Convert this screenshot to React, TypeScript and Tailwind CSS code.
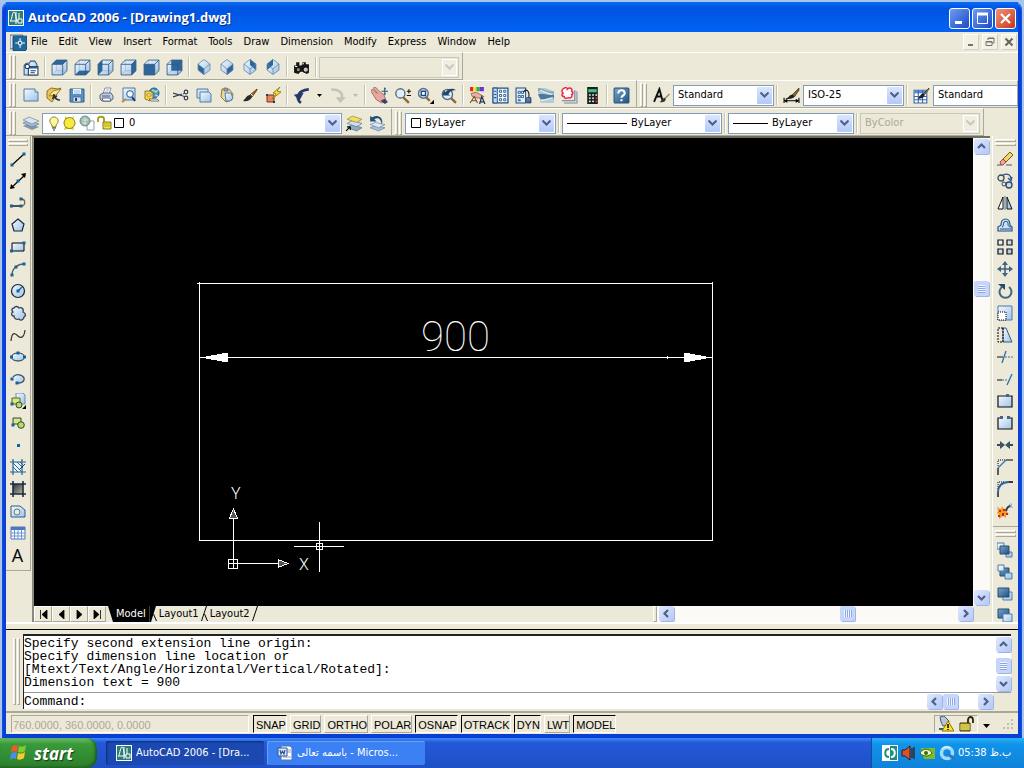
import { ReactNode } from "react";
import clsx from "clsx";

const NAVY = "#1d3c63";
const STEEL = "#4f7ea8";

function Icon({ children, size = 16 }: { children: ReactNode; size?: number }) {
  return (
    <svg width={size} height={size} viewBox="0 0 16 16" fill="none" aria-hidden="true">
      {children}
    </svg>
  );
}

// gradients shared by all of the icons
function Gradients() {
  return (
    <svg width="0" height="0" className="absolute" aria-hidden="true">
      <defs>
        <linearGradient id="sheen" x1="0" y1="0" x2="1" y2="1">
          <stop offset="0" stopColor="#f4f9ff" />
          <stop offset="1" stopColor="#9fc3e6" />
        </linearGradient>
        <linearGradient id="deep" x1="0" y1="0" x2="1" y2="1">
          <stop offset="0" stopColor="#7aa6cf" />
          <stop offset="1" stopColor="#1f507f" />
        </linearGradient>
        <linearGradient id="dusk" x1="0" y1="0" x2="1" y2="1">
          <stop offset="0" stopColor="#26344f" />
          <stop offset="1" stopColor="#b7b98a" />
        </linearGradient>
      </defs>
    </svg>
  );
}

/* ---------- view cubes ---------- */

function Cube({ face }: { face: string }) {
  return (
    <Icon size={17}>
      <path d="M1 5 5 1h10v10l-4 4H1z" fill="url(#sheen)" />
      <path d="M5 1v10h10M5 11l-4 4" stroke="#9db8d3" strokeWidth=".7" />
      <path d={face} fill="#2c669b" />
      <path d="M1 5 5 1h10v10l-4 4H1zM1 5h10v10M11 5l4-4" stroke="#33587f" strokeWidth=".8" />
    </Icon>
  );
}

function IsoCube({ face }: { face: string }) {
  return (
    <Icon>
      <path d="M8 0 14 5v6l-6 5-6-5V5z" fill="url(#sheen)" />
      <path d={face} fill="#2c669b" />
      <path d="M8 .5 14 5v6l-6 4.500L2 11V5zM2 5l6 5 6-5M8 10v5" stroke="#6485a6" strokeWidth=".8" />
    </Icon>
  );
}

const namedViews = (
  <Icon size={17}>
    <path d="M4 4h3l1-2h4l2 3v10H2V6z" fill="url(#sheen)" stroke="#33587f" />
    <path d="M6 7h9v8H6z" fill="#fff" stroke={NAVY} />
    <path d="M6 8h9" stroke="#2c5e93" strokeWidth="2" />
    <path d="M8 11h5M8 13h4" stroke={NAVY} />
    <circle cx="5" cy="7" r="2" fill="#fff" stroke={NAVY} />
  </Icon>
);

const camera = (
  <Icon size={17}>
    <path d="M1 6h2V3h3v3h2l1-3h3v2h3v8l-2 1-4-2H7l-2 2-4-1z" fill="#151515" />
    <circle cx="5" cy="10" r="2" fill="#8d8d86" stroke="#111" />
    <circle cx="12" cy="10" r="2.5" fill="#c9c8bd" stroke="#111" />
    <path d="M2 7h2M9 5l1-1" stroke="#fff" />
  </Icon>
);

/* ---------- standard toolbar ---------- */

const newFile = (
  <Icon>
    <path d="M1 2h11l3 3v9H1z" fill="url(#sheen)" stroke={STEEL} />
    <path d="M12 2v3h3" stroke={STEEL} fill="#fff" />
  </Icon>
);

const openFile = (
  <Icon>
    <path d="M1 4 5 1l7 1 3-1-4 6-5 8-5-4z" fill="#e8c65c" stroke="#97711b" />
    <path d="M3 9 7 4l8-2-5 6z" fill="#fbe9a0" stroke="#97711b" strokeWidth=".8" />
    <path d="M8 8c1 4 3 5 6 5M8 7l-1 4 4-2" stroke="#333" strokeWidth="1.5" />
  </Icon>
);

const saveFile = (
  <Icon>
    <path d="M1 2h14v13H1z" fill="#5c8fc0" stroke="#31618f" />
    <path d="M4 2h8v5H4z" fill="#eaf3fc" />
    <path d="M5 4h6M5 6h6" stroke="#91afcb" strokeWidth=".8" />
    <path d="M4 10h8v5H4z" fill="#cfe0f0" stroke="#31618f" strokeWidth=".7" />
    <path d="M6 11h2v3H6z" fill={NAVY} />
  </Icon>
);

const printer = (
  <Icon>
    <path d="M5 7 7 1h6l-2 6z" fill="#fff" stroke="#6b7898" strokeWidth=".8" />
    <path d="M2 8l3-2h8l2 3v3l-3 2H4l-2-2z" fill="#c9d0e2" stroke="#4a577a" strokeWidth=".9" />
    <path d="M4 11h8l1 3H5z" fill="#fff" stroke="#4a577a" strokeWidth=".9" />
    <path d="M4 9h8" stroke="#4a577a" />
    <path d="M8 3h3M7 5h3" stroke="#8b99b7" strokeWidth=".8" />
  </Icon>
);

const preview = (
  <Icon>
    <path d="M2 1h12v12H2z" fill="url(#sheen)" stroke={STEEL} />
    <path d="M5 12 1 15" stroke="#b8903a" strokeWidth="2" />
    <path d="m11 10 3 4" stroke={NAVY} strokeWidth="2" />
    <circle cx="9" cy="7" r="3.3" fill="#eef6ff" stroke="#315b88" />
  </Icon>
);

const publish = (
  <Icon>
    <circle cx="10" cy="6" r="5" fill="#4a91d1" stroke="#225d96" />
    <path d="m8 3 4 2 2-2M11 8l3 1" stroke="#a4dca9" strokeWidth="1.5" />
    <path d="M1 4h5l3 2v6l-3 2-5-2z" fill="#f6d640" stroke="#80620c" strokeWidth=".8" />
    <path d="M3 7h4v2H3z" fill="#fff" stroke="#80620c" strokeWidth=".6" />
    <path d="M5 12h8l2 2H7z" fill="#fff" stroke="#475b7e" strokeWidth=".8" />
  </Icon>
);

const cut = (
  <Icon>
    <path d="M0 6 10 9M0 10l9-3" stroke="#313d52" strokeWidth="1.2" />
    <circle cx="13" cy="5" r="1.8" stroke="#313d52" strokeWidth="1.2" />
    <circle cx="13" cy="11" r="1.8" stroke="#313d52" strokeWidth="1.2" />
    <path d="m10 9 2 1M10 7l2-1" stroke="#313d52" />
  </Icon>
);

const copy = (
  <Icon>
    <path d="M1 2h11v9H1z" fill="#cfe2f5" stroke={STEEL} />
    <path d="M4 5h9l2 2v8H4z" fill="url(#sheen)" stroke={STEEL} />
  </Icon>
);

const paste = (
  <Icon>
    <path d="M3 2h7l4 5-1 6-6 2-5-5z" fill="#e6d9a1" stroke="#8c7b39" />
    <path d="M5 1h3l1 3H5z" fill="#9aa4b4" stroke="#566173" strokeWidth=".7" />
    <path d="M6 6h6l2 5-3 3H7z" fill="url(#sheen)" stroke={STEEL} />
  </Icon>
);

const brush = (
  <Icon>
    <path d="M15 2 8 8l2 2 5-7z" fill="#a46a31" stroke="#50300f" strokeWidth=".8" />
    <path d="M8 8c-3 0-4 3-7 6 4 1 8-1 9-4z" fill="#2b2b2b" />
    <path d="m9 7 2 2" stroke="#e0d7ad" />
  </Icon>
);

const blockEdit = (
  <Icon>
    <path d="M2 8h7v7H2z" fill="#e7855c" stroke="#7d3519" />
    <path d="M15 0 8 6l3 1-4 5 9-7-4-1z" fill="#f8d92d" stroke="#8b6c07" strokeWidth=".8" />
    <path d="M1 7h2v2H1zM8 14h2v2H8z" fill={NAVY} />
  </Icon>
);

const undo = (
  <Icon size={18}>
    <path d="M7 15C2 11 4 4 14 3" stroke="#26376b" strokeWidth="2.4" />
    <path d="M1 7h9l-5 6z" fill="#26376b" transform="rotate(-12 5 9)" />
  </Icon>
);

const redo = (
  <Icon size={18}>
    <path d="M2 3c8 0 11 4 9 9" stroke="#c3c2b7" strokeWidth="2.2" />
    <path d="M6 10h9l-5 5z" fill="#c3c2b7" />
  </Icon>
);

const pan = (
  <Icon size={17}>
    <path d="M0 4 1 2l5 4-4-5 2-1 5 5 3 2 2 5-4 3-5-3z" fill="#e5a8a0" stroke="#9a564f" strokeWidth=".7" />
    <path d="m9 13 4-2 3 3-3 2z" fill="#30466d" />
    <path d="M13 1v6M10 4h6" stroke="#27517d" />
    <path d="m12 2 1-2 1 2zM12 6l1 2 1-2z" fill="#27517d" />
  </Icon>
);

const zoomRealtime = (
  <Icon size={17}>
    <path d="m8 9 6 6" stroke="#8c6a33" strokeWidth="2.2" />
    <circle cx="6" cy="6" r="4.3" fill="#dfeefb" stroke="#5a6e84" strokeWidth="1.3" />
    <path d="M14 2v4M12 4h4M12 8h4" stroke="#111" />
  </Icon>
);

const zoomWindow = (
  <Icon size={17}>
    <path d="m8 9 4 4" stroke="#8c6a33" strokeWidth="2.2" />
    <circle cx="6" cy="6" r="4.6" fill="#dfeefb" stroke="#5a6e84" strokeWidth="1.3" />
    <path d="M4 4h4v4H4z" fill="#fff" stroke="#154a82" strokeWidth="1.3" />
    <path d="M16 12v4h-4z" fill="#000" />
  </Icon>
);

const zoomPrevious = (
  <Icon size={17}>
    <path d="m9 9 6 6" stroke="#8c6a33" strokeWidth="2.2" />
    <circle cx="7" cy="7" r="4.8" fill="#dfeefb" stroke="#5a6e84" strokeWidth="1.3" />
    <path d="m2 8 2-5 1 2c3-4 7-4 10-2-4 0-6 1-7 4l2 1z" fill="#21456e" />
  </Icon>
);

const properties = (
  <Icon size={17}>
    <path d="M1 0h3v4H1z" fill="#e32424" />
    <path d="M4 0h3v4H4z" fill="#f0de2e" />
    <path d="M7 0h3v4H7z" fill="#28b43b" />
    <path d="M10 0h4v4h-4z" fill="#6c34d6" />
    <path d="m2 6 5-1 7 4-2 2-5-1-4-1z" fill="#e9b2a4" stroke="#8d4e43" strokeWidth=".7" />
    <path d="m1 15 4-6 3 6M3 13h4" stroke="#70531c" />
    <path d="m10 16 2-7 3 7M11 14h3" stroke="#1c365a" strokeWidth="1.2" />
  </Icon>
);

const designCenter = (
  <Icon size={17}>
    <path d="M1 1h14v14H1z" fill="#f6fafe" stroke="#1d4f86" strokeWidth="1.2" />
    <path d="M1 1h4v14H1z" fill="#c4dbf1" stroke="#1d4f86" strokeWidth=".9" />
    <path d="M7 3h2v2H7zM11 3h2v2h-2zM7 7h2v2H7zM11 7h2v2h-2zM7 11h2v2H7zM11 11h2v2h-2z" fill="#fff" stroke="#1d4f86" strokeWidth=".8" />
    <path d="M2 4h2M2 7h2M2 10h2" stroke="#1d4f86" />
  </Icon>
);

const toolPalettes = (
  <Icon size={17}>
    <path d="M1 1h9v14H1z" fill="#e3eefa" stroke="#1d4f86" />
    <path d="M3 4h2v2H3zM6 4h2v2H6zM3 8h2v2H3zM6 8h2v2H6zM3 12h2v1H3z" fill="#fff" stroke="#1d4f86" strokeWidth=".8" />
    <path d="M8 5c2-4 6-2 5 5" stroke="#111" />
    <path d="M11 10h4v5h-4z" fill="url(#deep)" stroke={NAVY} strokeWidth=".8" />
  </Icon>
);

const sheetSet = (
  <Icon size={17}>
    <path d="M0 1h7l8 3v11H2V9L0 7z" fill="#b5cbd9" />
    <path d="M0 7c5-2 9 2 15 0v4c-4-2-8 2-13 0z" fill="#4e7898" />
    <path d="M0 1c5 0 8 4 15 3v2C9 7 5 3 0 4z" fill="#86a7bc" />
    <path d="m2 3 11 4M3 13l11-3" stroke="#e9eff2" />
  </Icon>
);

const markup = (
  <Icon size={17}>
    <path d="M15 4v11H3" stroke="#7d86ad" />
    <path d="M13 3v10H1" stroke="#69719a" />
    <path
      d="M3 1c2-1 3 0 3 1 2-2 5-1 4 2 2 1 1 3 0 3 1 2-1 4-3 3-2 1-4 1-4-1-2 0-3-2-1-3-2-2-1-4 1-5z"
      fill="#fff"
      stroke="#e22e46"
      strokeWidth="1.4"
    />
  </Icon>
);

const calculator = (
  <Icon size={17}>
    <path d="M3 0h10v16H3z" fill="#17201c" />
    <path d="M4 2h8v3H4z" fill="#3fbf83" />
    <path d="M5 7h1v1H5zM8 7h1v1H8zM11 7h1v1h-1zM5 10h1v1H5zM8 10h1v1H8zM5 13h1v1H5zM8 13h1v1H8z" fill="#fff" stroke="#fff" strokeWidth=".5" />
    <path d="M11 10h1v1h-1zM11 13h1v1h-1z" fill="#f33" stroke="#f33" strokeWidth=".5" />
  </Icon>
);

const help = (
  <Icon size={17}>
    <rect x="1" y="1" width="14" height="14" rx="1" fill="url(#deep)" stroke="#23527f" />
    <path d="M5 6c0-4 6-4 6 0 0 2-3 2-3 4M8 11.500v2" stroke="#fff" strokeWidth="2" />
  </Icon>
);

const textStyle = (
  <Icon size={17}>
    <path d="m1 14 5-12 3 11M3 9h5" stroke="#111" strokeWidth="1.8" />
    <path d="m15 6-4 4 1 1 4-4z" fill="#a7894b" />
    <path d="M11 10c-3 1-2 3-5 4 3 1 6 0 6-3z" fill="#333" />
  </Icon>
);

const dimStyle = (
  <Icon size={17}>
    <path d="m15 1-6 6 2 2 4-6z" fill="#8a6b3a" stroke="#3d2c10" strokeWidth=".7" />
    <path d="M9 7C6 7 6 10 2 11c4 1 8 0 9-2z" fill="#222" />
    <path d="M1 10v5M15 10v5M1 13h14" stroke="#000" />
    <path d="m1 13 3-2v4zM15 13l-3-2v4z" fill="#000" />
  </Icon>
);

const tableStyle = (
  <Icon size={17}>
    <path d="M1 3h12v12H1z" fill="#fff" stroke="#3366a9" />
    <path d="M1 3h12v3H1z" fill="#5a8bd0" />
    <path d="M1 9h12M1 12h12M5 3v12M9 3v12" stroke="#3366a9" />
    <path d="m15 1-5 5 1 1 4-5z" fill="#9a7537" stroke="#4b340f" strokeWidth=".7" />
    <path d="M10 6c-3 0-3 3-6 5 4 0 7-1 7-4z" fill="#222" />
  </Icon>
);

/* ---------- layers ---------- */

const layers = (
  <Icon>
    <path d="m0 11 6-3 10 4-7 3z" fill="#8296ae" />
    <path d="m0 8 6-3 10 4-7 3z" fill="#a8bacd" stroke="#5e7592" strokeWidth=".6" />
    <path d="m0 5 6-3 10 4-7 3z" fill="#d8e4ef" stroke="#5e7592" strokeWidth=".6" />
  </Icon>
);

const layerCurrent = (
  <Icon size={17}>
    <path d="m2 12 5-3 9 3-5 3z" fill="#91a9c3" stroke="#4b6b8d" strokeWidth=".6" />
    <path d="m2 8 5-3 9 3-5 3z" fill="#cfdeed" stroke="#4b6b8d" strokeWidth=".6" />
    <path d="m2 4 5-3 9 3-5 3z" fill="#f0de6b" stroke="#8d7c16" strokeWidth=".6" />
    <path d="M1 15l4-4M5 11H2M5 11v3" stroke="#000" />
  </Icon>
);

const layerPrevious = (
  <Icon size={17}>
    <path d="m2 12 5-2 9 2-6 3z" fill="#a9bfd6" stroke="#5f80a3" strokeWidth=".6" />
    <path d="m2 9 5-2 9 2-6 3z" fill="#dbe8f5" stroke="#5f80a3" strokeWidth=".6" />
    <path d="M2 6h6L6 4c3-2 6-1 7 5 2-6-3-10-9-7L2 1z" fill="#24507e" />
  </Icon>
);

const layerState = (
  <svg width="78" height="16" viewBox="0 0 78 16" fill="none" aria-hidden="true">
    <path d="M5 10C1 7 3 2 7 2s6 5 2 8v2H5z" fill="#fbf6a4" stroke="#8c8320" />
    <path d="M5 13h4M6 15h2" stroke="#333" />
    <path d="m18 1 2 2h5l2-2-1 4 1 3-1 3 1 4-4-1h-3l-3 1 1-4-1-3 1-3z" fill="#d9c92d" />
    <circle cx="22.5" cy="8" r="5.5" fill="#f7e93e" stroke="#8c8320" />
    <path d="M40 6h7v9h-7z" fill="#fff" stroke="#8fa4a6" />
    <circle cx="38" cy="6" r="5" fill="#9eb9ae" stroke="#6d8d8b" />
    <path d="M35 5h6M38 2v8M35 8h5" stroke="#dbe6df" />
    <path d="M51 7V4c0-3 6-3 6 0v5" stroke="#a59a1c" strokeWidth="1.800" />
    <path d="M56 7h8v7h-8z" fill="#f3e640" stroke="#82791a" />
    <path d="M57 9h6M57 11h6" stroke="#a59a1c" strokeWidth=".8" />
    <path d="M67.500 3.500h9v9h-9z" fill="#fff" stroke="#000" />
  </svg>
);

const swatch = (
  <svg width="10" height="10" className="ml-px shrink-0" aria-hidden="true">
    <path d="M.5.5h9v9h-9z" fill="#fff" stroke="#000" />
  </svg>
);

/* ---------- draw toolbar ---------- */

// small blue grip marks on the geometry
function Dots({ at }: { at: number[][] }) {
  return (
    <>
      {at.map(([x, y]) => (
        <rect key={`${x}-${y}`} x={x - 1.5} y={y - 1.5} width="3" height="3" fill="#14639a" />
      ))}
    </>
  );
}

const CLOUD =
  "M4 3c1-2 4-2 5 0 3-1 5 1 4 4 3 1 3 4 1 5 0 3-4 4-5 2-2 1-5 0-5-3-3 0-3-3-1-4-2-2-1-4 1-4z";

const drawTools: [string, ReactNode][] = [
  ["Line", <Icon><path d="M2 14 14 3" stroke="#000" strokeWidth="1.2" /><Dots at={[[2, 14], [14, 3]]} /></Icon>],
  ["Construction line", <Icon><path d="M1 15 15 2" stroke="#000" strokeWidth="1.2" /><path d="m0 16 1-5 4 4zM16 0l-5 1 4 4z" fill="#000" /><Dots at={[[8, 8]]} /></Icon>],
  ["Polyline", <Icon><path d="M1 11h10" stroke="#000" strokeWidth="1.3" /><path d="M11 4c5 0 5 7 0 7" stroke="#7f6144" strokeWidth="1.3" /><Dots at={[[1.5, 11], [11, 11], [11, 4]]} /></Icon>],
  ["Polygon", <Icon><path d="M8 2 14 7l-2 7H4L2 7z" fill="url(#sheen)" stroke="#16263a" strokeWidth="1.2" /></Icon>],
  ["Rectangle", <Icon><path d="M2 4h12v8H2z" fill="url(#sheen)" stroke="#000" /><Dots at={[[1.5, 12], [14, 4]]} /></Icon>],
  ["Arc", <Icon><path d="M2 14C2 8 7 3 14 3" stroke="#5b5b5b" strokeWidth="1.3" /><Dots at={[[2, 14], [6, 6], [14, 3]]} /></Icon>],
  ["Circle", <Icon><circle cx="8" cy="8" r="6.5" fill="url(#sheen)" stroke="#16263a" strokeWidth="1.2" /><path d="m8 8 4-4" stroke="#14639a" strokeWidth="1.5" /><Dots at={[[8, 8]]} /></Icon>],
  ["Revision cloud", <Icon><path d={CLOUD} fill="url(#sheen)" stroke="#33404f" strokeWidth="1.3" /></Icon>],
  ["Spline", <Icon><path d="M1 14C2 3 6 7 8 9s6 3 7-6" stroke="#333" strokeWidth="1.2" /></Icon>],
  ["Ellipse", <Icon><ellipse cx="8" cy="8" rx="6.5" ry="4" fill="url(#sheen)" stroke="#16263a" /><Dots at={[[1.5, 8], [8, 4], [14.5, 8]]} /></Icon>],
  ["Ellipse arc", <Icon><path d="M3 6c4-5 12-1 11 3-1 3-4 3-6 3" fill="url(#sheen)" stroke="#3a506b" strokeWidth="1.3" /><Dots at={[[2, 8], [7, 12]]} /></Icon>],
  ["Insert block", <Icon><path d="M6 0h7l2 2v9H6z" fill="url(#sheen)" stroke="#6a8fb4" /><path d="M2 5h8v6H2z" fill="#d9e679" stroke="#4a6c2d" /><circle cx="9" cy="12" r="3" fill="#bcd667" stroke="#2f4e2a" /><Dots at={[[2, 11]]} /><path d="M16 12v4h-4z" fill="#000" /></Icon>],
  ["Make block", <Icon><path d="M3 3h8v6H3z" fill="#d9e679" stroke="#2b4c4a" /><circle cx="11" cy="10" r="3.3" fill="#bcd667" stroke="#2f4e2a" /><Dots at={[[3, 10]]} /></Icon>],
  ["Point", <Icon><Dots at={[[8.5, 8.5]]} /></Icon>],
  ["Hatch", <Icon><path d="M3 3h10v10H3z" fill="#eaf4fd" /><path d="m3 4 9 9M3 8l5 5M7 3l6 6M10 3l3 3" stroke="#24669b" /><path d="M3 0v16M12 0v16M0 3h16M0 13h16" stroke="#2b6090" strokeWidth="1.2" /><path d="m9 11 6-6" stroke={NAVY} /></Icon>],
  ["Gradient", <Icon><path d="M3 3h10v10H3z" fill="url(#dusk)" /><path d="M3 0v16M13 0v16M0 3h16M0 13h16" stroke="#1d2b45" strokeWidth="1.6" /></Icon>],
  ["Region", <Icon><path d="M1 3h9l5 4v7H1z" fill="url(#sheen)" stroke="#315d8a" /><circle cx="7" cy="9" r="3" fill="#eee9d4" stroke="#54799e" /></Icon>],
  ["Table", <Icon><path d="M1 2h14v12H1z" fill="#fff" stroke="#4b78b8" /><path d="M1 2h14v3H1z" fill="#4b78c0" /><path d="M1 8h14M1 11h14M4.500 5v9M8 5v9M11.500 5v9" stroke="#6b96d2" /></Icon>],
];

/* ---------- modify toolbar ---------- */

const modifyTools: [string, ReactNode][] = [
  ["Erase", <Icon><path d="M0 14h4M9 14h6" stroke="#555" /><path d="m6 8 7-7 3 3-7 7z" fill="#f1d567" stroke="#5f4c1a" strokeWidth=".9" /><path d="m3 11 3-3 3 3-3 3H4z" fill="#f1a497" stroke="#7c3329" strokeWidth=".8" /></Icon>],
  ["Copy", <Icon><circle cx="4" cy="5" r="3" stroke="#33475f" strokeWidth="1.3" /><circle cx="12" cy="12" r="3" fill="#c5dcf2" stroke="#33475f" strokeWidth="1.3" /><circle cx="7" cy="11" r="2" stroke="#33475f" /><path d="M6 2c5-2 8 0 8 4M11 5l3 3 1-4" stroke="#245785" strokeWidth="1.3" /></Icon>],
  ["Mirror", <Icon><path d="M6 2v12H1z" fill="#fff" stroke="#111" /><path d="M10 2v12h5z" fill="#a9c9e6" stroke="#111" /><path d="M8 1v14" stroke="#3b79ae" /></Icon>],
  ["Offset", <Icon><path d="M1 14v-4c0-1 3-1 3-2 0-8 9-8 9 0 0 1 2 1 2 2v4z" fill="#cbe0f4" stroke="#1d4f86" strokeWidth="1.2" /><path d="M3 12h11M5 10c2 0 1-4 2-5s4-1 4 1 0 4 3 4" stroke="#1d4f86" /></Icon>],
  ["Array", <Icon><path d="M1 1h5v5H1zM10 1h5v5h-5zM1 10h5v5H1zM10 10h5v5h-5z" fill="url(#sheen)" stroke="#111" strokeWidth="1.2" /></Icon>],
  ["Move", <Icon><path d="M8 2v12M2 8h12" stroke="#3e6484" strokeWidth="1.6" /><path d="m5 4 3-4 3 4zM5 12l3 4 3-4zM4 5 0 8l4 3zM12 5l4 3-4 3z" fill="#3e6484" /></Icon>],
  ["Rotate", <Icon><path d="M5 4a6 6 0 1 0 7 0" stroke="#416581" strokeWidth="2" /><path d="M1 1h7v6z" fill="#254b6e" /></Icon>],
  ["Scale", <Icon><path d="M1 1h14v14H1z" fill="url(#sheen)" stroke="#4979aa" /><path d="M1 7h8v8H1z" fill="#fff" stroke="#000" strokeDasharray="1 1" /></Icon>],
  ["Stretch", <Icon><path d="M6 1h3l6 14H6z" fill="url(#sheen)" stroke="#335d88" /><path d="M6 1H1v14h5z" stroke="#000" strokeDasharray="2 1" /></Icon>],
  ["Trim", <Icon><path d="M0 8h6" stroke="#111" /><path d="M8 8h8" stroke="#3b79ae" strokeDasharray="2 1" /><path d="m9 2-4 12" stroke="#2c6ea5" strokeWidth="1.3" /></Icon>],
  ["Extend", <Icon><path d="M0 9h5" stroke="#111" /><path d="M5 9h6" stroke="#3b79ae" strokeDasharray="2 1" /><path d="m15 3-5 11" stroke="#2c6ea5" strokeWidth="1.3" /></Icon>],
  ["Break at point", <Icon><path d="M1 3h14v11H1z" fill="url(#sheen)" stroke="#111" strokeWidth="1.2" /><path d="M9 1h3v3H9z" fill="#446789" /></Icon>],
  ["Break", <Icon><path d="M1 3h14v11H1z" fill="url(#sheen)" /><path d="M4 3H1v11h14V3h-3" stroke="#111" strokeWidth="1.2" /><path d="M3 1h3v3H3zM10 1h3v3h-3z" fill="#446789" /></Icon>],
  ["Join", <Icon><path d="M0 8h5M11 8h5" stroke="#111" strokeWidth="1.4" /><path d="m3 4 5 4-5 4zM13 4 8 8l5 4z" fill="#3c5268" /></Icon>],
  ["Chamfer", <Icon><path d="M1 16V9M9 1h7" stroke="#000" strokeWidth="1.2" /><path d="M1 7V1h7" stroke="#000" strokeDasharray="1 1" /><path d="m1 9 8-8" stroke="#2f77bb" strokeWidth="1.3" /></Icon>],
  ["Fillet", <Icon><path d="M1 16v-5M12 1h4" stroke="#000" strokeWidth="1.3" /><path d="M1 8V1h7" stroke="#000" strokeDasharray="1 1" /><path d="M1 12C1 5 5 1 12 1" stroke="#2f62a5" strokeWidth="1.8" /></Icon>],
  ["Explode", <Icon><path d="m0 4 4 2 1-3 2 3 4-1-1 4 2 2-3 1v3l-3-2-4 3V12L0 10l1-2z" fill="#f29a2e" /><path d="M2 7h2v2H2zM6 6h2v2H6zM5 10h2v3H5zM1 12h2v2H1zM9 10h2v2H9z" fill="#c22a1d" /><path d="M9 8c1-4 3-5 5-5" stroke="#223c5c" strokeWidth="1.8" /><path d="M14 0v5M12 1l4 4M12 5l3-4" stroke="#8fa3b8" strokeWidth=".8" /></Icon>],
];

const orderTools: [string, ReactNode][] = [
  ["Bring to front", <Icon><path d="M0 1h7v6H0zM9 10h6v5H9z" fill="url(#sheen)" stroke={STEEL} /><path d="M3 4h9v8H3z" fill="url(#deep)" stroke="#244d75" /></Icon>],
  ["Send to back", <Icon><path d="M3 4h9v8H3z" fill="url(#deep)" stroke="#244d75" /><path d="M1 1h6v6H1zM8 9h7v6H8z" fill="url(#sheen)" stroke={STEEL} /></Icon>],
  ["Bring above object", <Icon><path d="M6 6h9v8H6z" fill="url(#sheen)" stroke={STEEL} /><path d="M1 2h11v9H1z" fill="url(#deep)" stroke="#244d75" /></Icon>],
  ["Send under object", <Icon><path d="M1 1h11v9H1z" fill="url(#deep)" stroke="#244d75" /><path d="M6 6h9v8H6z" fill="url(#sheen)" stroke={STEEL} /></Icon>],
];

/* ---------- toolbar parts ---------- */

function ToolButton({ label, children }: { label: string; children: ReactNode }) {
  return (
    <button aria-label={label} className="flex h-[22px] w-[23px] shrink-0 items-center justify-center">
      {children}
    </button>
  );
}

function Caret({ label, off }: { label: string; off?: boolean }) {
  return (
    <button aria-label={label} className="flex w-[13px] shrink-0 items-center justify-center">
      <svg width="5" height="3" aria-hidden="true">
        <path d="M0 0h5L2.500 3z" fill={off ? "#bab9ad" : "#000"} />
      </svg>
    </button>
  );
}

function Sep() {
  return (
    <div className="flex h-5 w-1.5 shrink-0 justify-center">
      <div className="w-0.5 border-r border-l border-r-white border-l-[#c5c2b0]" />
    </div>
  );
}

function Grip({ flat }: { flat?: boolean }) {
  const bar = "border border-t-white border-l-white border-r-[#aca899] border-b-[#aca899]";
  return (
    <div
      className={clsx(
        "flex shrink-0 gap-px",
        flat ? "mx-0.5 h-[9px] flex-col" : "mx-[3px] h-full"
      )}
    >
      <div className={clsx(bar, flat ? "h-[3px]" : "w-[3px]")} />
      <div className={clsx(bar, flat ? "h-[3px]" : "w-[3px]")} />
    </div>
  );
}

function Toolbar({ children, grow }: { children: ReactNode; grow?: boolean }) {
  return (
    <div
      className={clsx(
        "flex h-7 items-center border-t border-r border-b border-t-white border-r-[#aca899] border-b-[#aca899] pt-0.5 pr-[3px]",
        grow ? "min-w-0 flex-1 overflow-hidden" : "shrink-0"
      )}
    >
      <Grip />
      {children}
    </div>
  );
}

function Combo({
  label,
  value,
  width,
  off,
  lead,
}: {
  label: string;
  value: string;
  width: string;
  off?: boolean;
  lead?: ReactNode;
}) {
  return (
    <div
      className={clsx(
        "flex h-[21px] shrink-0 items-center gap-1 border p-px pl-1",
        width,
        off ? "border-[#c9c7ba] bg-[#ece9d8]" : "border-[#7f9db9] bg-white"
      )}
    >
      {lead}
      <select
        aria-label={label}
        disabled={off}
        className={clsx(
          "h-full min-w-0 flex-1 appearance-none bg-transparent outline-none",
          off ? "text-[#aca899]" : "text-black"
        )}
      >
        <option>{value}</option>
      </select>
      <span
        className={clsx(
          "flex h-full w-[15px] shrink-0 items-center justify-center",
          off ? "border border-white bg-[#f0eee2]" : "rounded-[1px] bg-linear-to-b from-[#dbe5ff] to-[#b5c8f7]"
        )}
      >
        <svg width="9" height="6" aria-hidden="true">
          <path d="m.5.5 4 4 4-4" fill="none" stroke={off ? "#c9c7ba" : "#4d6185"} strokeWidth="2" />
        </svg>
      </span>
    </div>
  );
}

function LineSample({ long }: { long?: boolean }) {
  return <div className={clsx("h-px shrink-0 bg-black", long ? "w-[60px]" : "w-[35px]")} />;
}

/* ---------- scroll bars ---------- */

const ARROWS = {
  up: "m4 9 3.500-3.500L11 9",
  down: "m4 6 3.500 3.500L11 6",
  left: "M9 4 5.500 7.500 9 11",
  right: "m6 4 3.500 3.500L6 11",
};

function ScrollButton({ dir }: { dir: keyof typeof ARROWS }) {
  return (
    <button
      aria-label={`Scroll ${dir}`}
      className="size-[15px] shrink-0 rounded-[2px] bg-linear-to-br from-[#dfe8ff] to-[#b4c7f6] shadow-[1px_1px_0_#9fb5e6]"
    >
      <svg width="15" height="15" aria-hidden="true">
        <path d={ARROWS[dir]} fill="none" stroke="#4d6185" strokeWidth="2.200" />
      </svg>
    </button>
  );
}

function Thumb({ vertical }: { vertical?: boolean }) {
  return (
    <div className="size-[15px] shrink-0 rounded-[2px] bg-[#c5d5fb] shadow-[1px_1px_0_#9fb5e6]">
      <svg width="15" height="15" aria-hidden="true">
        <path
          d={vertical ? "M4 4.500h7M4 6.500h7M4 8.500h7M4 10.500h7" : "M4.500 4v7M6.500 4v7M8.500 4v7M10.500 4v7"}
          stroke="#f0f5ff"
        />
        <path
          d={vertical ? "M4 5.500h7M4 7.500h7M4 9.500h7M4 11.500h7" : "M5.500 4v7M7.500 4v7M9.500 4v7M11.500 4v7"}
          stroke="#8ea7e0"
        />
      </svg>
    </div>
  );
}

/* ---------- window parts ---------- */

function AcadLogo({ size }: { size: number }) {
  return (
    <Icon size={size}>
      <path d="M0 0h16v16H0z" fill="#fff" />
      <path d="M1 1h14v14H1z" fill="#2a7d7a" />
      <path d="M2 11c2 0 2-9 4-9s2 9 3 9M8 2v12M2 11h12M11 3v7" stroke="#fff" />
      <path d="M10 9h4v4h-4z" fill="#2a7d7a" stroke="#fff" />
    </Icon>
  );
}

function TitleBar() {
  const btn = "flex size-[21px] items-center justify-center rounded-[3px] border border-white";
  return (
    <header className="flex h-[30px] shrink-0 items-center bg-linear-to-b from-[#0a6cf5] via-[#0054e0] via-20% to-[#0262f4] px-0.5 pt-0.5">
      <AcadLogo size={16} />
      <h1 className="ml-1 flex-1 font-['Open_Sans',sans-serif] text-[13px] font-bold text-white [text-shadow:1px_1px_0_#0a2a80]">
        AutoCAD 2006 - [Drawing1.dwg]
      </h1>
      <div className="flex gap-0.5">
        <button aria-label="Minimize" className={clsx(btn, "bg-linear-to-br from-[#6f9bf5] to-[#1c48c4]")}>
          <svg width="13" height="13" aria-hidden="true"><path d="M2 9h7v3H2z" fill="#fff" /></svg>
        </button>
        <button aria-label="Maximize" className={clsx(btn, "bg-linear-to-br from-[#6f9bf5] to-[#1c48c4]")}>
          <svg width="13" height="13" fill="none" stroke="#fff" aria-hidden="true">
            <path d="M1.500 2.500h10v9h-10z" /><path d="M1 2h11" strokeWidth="3" />
          </svg>
        </button>
        <button aria-label="Close" className={clsx(btn, "bg-linear-to-br from-[#f0907a] to-[#c8330f]")}>
          <svg width="13" height="13" aria-hidden="true"><path d="m2 2 9 9M11 2l-9 9" stroke="#fff" strokeWidth="2.200" /></svg>
        </button>
      </div>
    </header>
  );
}

const MENU = ["File", "Edit", "View", "Insert", "Format", "Tools", "Draw", "Dimension", "Modify", "Express", "Window", "Help"];

function MenuBar() {
  const btn = "flex h-4 w-4 items-center justify-center border border-t-white border-l-white border-r-[#d3d0c0] border-b-[#d3d0c0] bg-[#f3f1e6]";
  return (
    <nav className="flex h-5 shrink-0 items-center pl-1">
      <Icon size={17}>
        <path d="M0 1h12v2H3v11H0z" fill="#dbe6f2" stroke="#33567d" strokeWidth=".8" />
        <path d="M3 2h13v12l-2 2H3z" fill="#1f6a9c" stroke="#123f66" strokeWidth=".8" />
        <path d="M9.500 4v9M5 8.500h9" stroke="#fff" />
        <path d="M8 7h3v3H8z" fill="#1f6a9c" stroke="#fff" strokeWidth=".8" />
      </Icon>
      <div className="ml-1 flex flex-1 gap-[11px]">
        {MENU.map((m) => (
          <button key={m}>{m}</button>
        ))}
      </div>
      <div className="flex gap-[3px] pr-px">
        <button aria-label="Minimize drawing" className={btn}>
          <svg width="10" height="10" aria-hidden="true"><path d="M2 7h5v2H2z" fill="#77756a" /></svg>
        </button>
        <button aria-label="Restore drawing" className={btn}>
          <svg width="10" height="10" fill="none" stroke="#77756a" aria-hidden="true"><path d="M3 3V1h6v5H7M3 1.500h6M1 4.500h6v4H1zM1 5h6" /></svg>
        </button>
        <button aria-label="Close drawing" className={btn}>
          <svg width="10" height="10" aria-hidden="true"><path d="m1.500 1.500 7 7M8.500 1.500l-7 7" stroke="#66645a" strokeWidth="2" /></svg>
        </button>
      </div>
    </nav>
  );
}

const orthoViews = [
  ["Top view", "M1 5 5 1h10l-4 4z"],
  ["Bottom view", "m1 15 4-4h10l-4 4z"],
  ["Left view", "M1 5l4-4v10l-4 4z"],
  ["Right view", "m11 5 4-4v10l-4 4z"],
  ["Front view", "M1 5h10v10H1z"],
  ["Back view", "M5 1h10v10H5z"],
];

const isoViews = [
  ["SW isometric", "m2 5 6 5v6l-6-5z"],
  ["SE isometric", "m8 10 6-5v6l-6 5z"],
  ["NE isometric", "m8 0 6 5v6L8 6z"],
  ["NW isometric", "M8 0 2 5v6l6-5z"],
];

function Toolbars() {
  return (
    <div className="shrink-0">
      <div className="flex">
        <Toolbar>
          <ToolButton label="Named views">{namedViews}</ToolButton>
          <Sep />
          {orthoViews.map(([label, face]) => (
            <ToolButton key={label} label={label}><Cube face={face} /></ToolButton>
          ))}
          <Sep />
          {isoViews.map(([label, face]) => (
            <ToolButton key={label} label={label}><IsoCube face={face} /></ToolButton>
          ))}
          <Sep />
          <ToolButton label="Camera">{camera}</ToolButton>
          <Sep />
          <Combo label="View" value="" width="w-[140px]" off />
        </Toolbar>
        <div className="flex-1 border-t border-white" />
      </div>
      <div className="flex">
        <Toolbar>
          <ToolButton label="New">{newFile}</ToolButton>
          <ToolButton label="Open">{openFile}</ToolButton>
          <ToolButton label="Save">{saveFile}</ToolButton>
          <Sep />
          <ToolButton label="Plot">{printer}</ToolButton>
          <ToolButton label="Plot preview">{preview}</ToolButton>
          <ToolButton label="Publish">{publish}</ToolButton>
          <Sep />
          <ToolButton label="Cut">{cut}</ToolButton>
          <ToolButton label="Copy to clipboard">{copy}</ToolButton>
          <ToolButton label="Paste">{paste}</ToolButton>
          <ToolButton label="Match properties">{brush}</ToolButton>
          <ToolButton label="Block editor">{blockEdit}</ToolButton>
          <Sep />
          <ToolButton label="Undo">{undo}</ToolButton>
          <Caret label="Undo list" />
          <ToolButton label="Redo">{redo}</ToolButton>
          <Caret label="Redo list" off />
          <Sep />
          <ToolButton label="Pan">{pan}</ToolButton>
          <ToolButton label="Zoom realtime">{zoomRealtime}</ToolButton>
          <ToolButton label="Zoom window">{zoomWindow}</ToolButton>
          <ToolButton label="Zoom previous">{zoomPrevious}</ToolButton>
          <Sep />
          <ToolButton label="Properties">{properties}</ToolButton>
          <ToolButton label="DesignCenter">{designCenter}</ToolButton>
          <ToolButton label="Tool palettes">{toolPalettes}</ToolButton>
          <ToolButton label="Sheet set manager">{sheetSet}</ToolButton>
          <ToolButton label="Markup set manager">{markup}</ToolButton>
          <ToolButton label="Calculator">{calculator}</ToolButton>
          <Sep />
          <ToolButton label="Help topics">{help}</ToolButton>
        </Toolbar>
        <Toolbar grow>
          <ToolButton label="Text style manager">{textStyle}</ToolButton>
          <Combo label="Text style" value="Standard" width="w-[101px]" />
          <Sep />
          <ToolButton label="Dimension style manager">{dimStyle}</ToolButton>
          <Combo label="Dimension style" value="ISO-25" width="w-[101px]" />
          <Sep />
          <ToolButton label="Table style manager">{tableStyle}</ToolButton>
          <Combo label="Table style" value="Standard" width="w-[101px]" />
        </Toolbar>
      </div>
      <div className="flex">
        <Toolbar>
          <ToolButton label="Layer properties">{layers}</ToolButton>
          <Combo label="Layer" value="0" width="w-[300px]" lead={layerState} />
          <ToolButton label="Make layer current">{layerCurrent}</ToolButton>
          <ToolButton label="Layer previous">{layerPrevious}</ToolButton>
        </Toolbar>
        <Toolbar>
          <Combo label="Color" value="ByLayer" width="w-[151px]" lead={swatch} />
          <Sep />
          <Combo label="Linetype" value="ByLayer" width="w-[160px]" lead={<LineSample long />} />
          <Sep />
          <Combo label="Lineweight" value="ByLayer" width="w-[126px]" lead={<LineSample />} />
          <Sep />
          <Combo label="Plot style" value="ByColor" width="w-[120px]" off />
        </Toolbar>
      </div>
    </div>
  );
}

function ToolColumn({ tools }: { tools: [string, ReactNode][] }) {
  return (
    <>
      {tools.map(([label, icon]) => (
        <ToolButton key={label} label={label}>{icon}</ToolButton>
      ))}
    </>
  );
}

function Drawing() {
  return (
    <svg
      width="939"
      height="468"
      fill="none"
      stroke="#fff"
      shapeRendering="crispEdges"
      className="block"
      role="img"
      aria-label="Drawing1.dwg"
    >
      <path d="M163 145.500h516M165.500 144v259M678.500 144v259M165 402.500h514" />
      <path d="M166 219.500h512M633.500 218v3" />
      <path d="m166 219.500 28-5v10zM678 219.500l-28-5v10z" fill="#fff" stroke="none" />
      {/* UCS icon */}
      <path d="M194.500 421.500h9v9h-9zM199.500 380v50M195 425.500h50" />
      <path d="m199.500 371-4 9h8z" fill="#555" />
      <path d="m254 425.500-10-4v8z" fill="#555" />
      {/* crosshair */}
      <path d="M260 408.500h50M285.500 384v50M282.500 405.500h6v6h-6z" />
      <g fill="#fff" stroke="none" className="font-['Roboto',sans-serif] font-thin">
        <text x="387" y="213" className="text-[42px]">900</text>
        <text x="197" y="361" className="text-[16px] font-light">Y</text>
        <text x="265" y="432" className="text-[16px] font-light">X</text>
      </g>
    </svg>
  );
}

const TAB_NAV = [
  ["First tab", "M1.500 0v9M8 0v9L3 4.500z"],
  ["Previous tab", "M7 0v9L2 4.500z"],
  ["Next tab", "M2 0v9l5-4.500z"],
  ["Last tab", "M7.500 0v9M1 0v9l5-4.500z"],
];

// slanted edge between two sheet tabs; the last one has no neighbour behind it
function Slash({ last }: { last?: boolean }) {
  return (
    <svg width="7" height="16" className="shrink-0" aria-hidden="true">
      <path d={last ? "M5.500 0 .5 15" : "M5.500 0 .5 15M3.500 8l3 7"} fill="none" stroke="#000" />
    </svg>
  );
}

function LayoutTabs() {
  return (
    <div className="flex h-4 shrink-0 bg-[#ece9d8]">
      {TAB_NAV.map(([label, d]) => (
        <button
          key={label}
          aria-label={label}
          className="flex w-[18px] items-center justify-center border border-t-white border-l-white border-r-[#aca899] border-b-[#aca899]"
        >
          <svg width="9" height="9" aria-hidden="true">
            <path d={d} fill="#000" stroke="#000" strokeWidth=".8" />
          </svg>
        </button>
      ))}
      <button className="ml-0.5 bg-black pr-1 pl-2 leading-4 text-white [clip-path:polygon(0_0,100%_0,100%_100%,5px_100%)]">
        Model
      </button>
      <svg width="7" height="16" className="shrink-0" aria-hidden="true">
        <path d="M0 0h6L1 16H0z" fill="#000" />
        <path d="m3.500 8 3 7" stroke="#000" />
      </svg>
      <button className="px-0.5 leading-4">Layout1</button>
      <Slash />
      <button className="px-0.5 leading-4">Layout2</button>
      <Slash last />
      <div className="flex-1" />
      <div className="flex w-80 bg-[#fbfaf6]">
        <div className="mr-0.5 w-1 shrink-0 border border-t-white border-l-white border-r-[#aca899] border-b-[#aca899] bg-[#ece9d8]" />
        <ScrollButton dir="left" />
        <div className="grow-[165]" />
        <Thumb />
        <div className="grow-[103]" />
        <ScrollButton dir="right" />
      </div>
      <div className="w-[17px]" />
    </div>
  );
}

function Workspace() {
  return (
    <main className="flex min-h-0 flex-1 overflow-hidden border-b-2 border-white">
      <aside className="flex w-[25px] shrink-0 flex-col self-start border-r border-b border-[#aca899] pt-[3px] pb-1">
        <Grip flat />
        <ToolColumn tools={drawTools} />
        <button
          aria-label="Multiline text"
          className="h-[22px] w-[23px] font-['Open_Sans',sans-serif] text-[18px] leading-[22px] text-black"
        >
          A
        </button>
      </aside>
      <section className="ml-px flex min-w-0 flex-1 flex-col border-t-2 border-l-2 border-t-[#6f6d62] border-l-[#8b897c]">
        <div className="flex min-h-0 flex-1">
          <div className="min-w-0 flex-1 overflow-hidden bg-black">
            <Drawing />
          </div>
          <div className="flex w-[17px] shrink-0 flex-col items-center bg-[#fbfaf6] py-px">
            <ScrollButton dir="up" />
            <div className="grow-[126]" />
            <Thumb vertical />
            <div className="grow-[293]" />
            <ScrollButton dir="down" />
          </div>
        </div>
        <LayoutTabs />
      </section>
      <aside className="ml-0.5 flex w-[26px] shrink-0 flex-col border-l border-white">
        <div className="border-b border-[#aca899] pt-[3px] pb-1">
          <Grip flat />
          <ToolColumn tools={modifyTools} />
        </div>
        <div className="pt-[3px]">
          <Grip flat />
          <ToolColumn tools={orderTools} />
        </div>
      </aside>
    </main>
  );
}

const HISTORY = [
  "Specify second extension line origin:",
  "Specify dimension line location or",
  "[Mtext/Text/Angle/Horizontal/Vertical/Rotated]:",
  "Dimension text = 900",
];

function CommandPanel() {
  return (
    <section className="shrink-0 pt-[5px] pb-0.5">
      <div className="flex border-t border-black pt-1">
        <div className="my-1 ml-1 flex">
          <Grip />
        </div>
        <div className="mr-[7px] min-w-0 flex-1 border-t-2 border-l border-[#222] font-['Liberation_Mono',monospace] text-[13px] leading-[13px] text-black">
          <div className="flex border-b border-[#9a9a9a] bg-white">
            <div className="flex-1 pt-px pb-[3px]">
              {HISTORY.map((line) => (
                <p key={line}>{line}</p>
              ))}
            </div>
            <div className="flex w-4 flex-col items-center py-px">
              <ScrollButton dir="up" />
              <div className="flex-2" />
              <Thumb vertical />
              <div className="flex-1" />
              <ScrollButton dir="down" />
            </div>
          </div>
          <div className="flex h-4 items-center bg-[#ece9d8]">
            <label className="flex h-full flex-1 items-center bg-white">
              Command:
              <input aria-label="Command" className="ml-2 min-w-0 flex-1 outline-none" />
            </label>
            <div className="mr-[18px] flex h-full w-[66px] items-center bg-white">
              <ScrollButton dir="left" />
              <div className="w-px" />
              <Thumb />
              <div className="flex-1" />
              <ScrollButton dir="right" />
            </div>
          </div>
        </div>
      </div>
    </section>
  );
}

const MODES: [string, boolean][] = [
  ["SNAP", true],
  ["GRID", false],
  ["ORTHO", false],
  ["POLAR", false],
  ["OSNAP", true],
  ["OTRACK", true],
  ["DYN", true],
  ["LWT", false],
  ["MODEL", true],
];

function StatusBar() {
  return (
    <footer className="flex h-[23px] shrink-0 items-center border-t-2 border-[#aca899] pr-1 pl-[5px] font-['Liberation_Sans',sans-serif]">
      <div className="h-[18px] w-[238px] border border-t-[#aca899] border-r-white border-b-white border-l-[#aca899] pl-px leading-[18px] text-[#aca899]">
        760.0000, 360.0000, 0.0000
      </div>
      <div className="ml-1 flex gap-[3px]">
        {MODES.map(([mode, on]) => (
          <button
            key={mode}
            aria-pressed={on}
            className={clsx(
              "h-[18px] border pl-0.5 leading-[18px] text-black",
              on
                ? "border-t-black border-r-white border-b-white border-l-black"
                : "border-t-white border-r-[#aca899] border-b-[#aca899] border-l-white"
            )}
          >
            {mode}
          </button>
        ))}
      </div>
      <div className="flex-1" />
      <div className="flex h-[18px] w-11 items-center justify-around border border-t-[#aca899] border-r-white border-b-white border-l-[#aca899]">
        <Icon>
          <path d="m2 1 4-1 5 5-1 4-5 1-2-4z" fill="#b6c5da" stroke="#405a80" />
          <path d="M1 13h5" stroke="#405a80" strokeWidth="2" />
          <path d="m10 5 6 10H4z" fill="#ffe227" stroke="#8d7600" />
          <path d="M10 8v4M10 13v1" stroke="#000" strokeWidth="1.500" />
        </Icon>
        <Icon>
          <path d="M9 7V4c0-4 5-4 5 0v3" stroke="#2c2703" strokeWidth="1.800" />
          <path d="M1 7h10v8H1z" fill="#b8a31d" stroke="#3f3805" />
          <path d="M1 9h10M1 11h10M1 13h10" stroke="#efe275" />
        </Icon>
      </div>
      <button aria-label="Status bar menu" className="mr-2 flex w-4 items-end justify-center pt-1">
        <svg width="7" height="4" aria-hidden="true"><path d="M0 0h7L3.500 4z" fill="#000" /></svg>
      </button>
      <svg width="12" height="12" aria-hidden="true">
        <path d="M9 1h2v2H9zM9 5h2v2H9zM9 9h2v2H9zM5 5h2v2H5zM5 9h2v2H5zM1 9h2v2H1z" fill="#c2bfae" />
      </svg>
    </footer>
  );
}

function Taskbar() {
  return (
    <footer className="flex h-[30px] shrink-0 bg-linear-to-b from-[#3f8bf3] via-[#2459da] via-15% to-[#1e4fc4] text-white">
      <button className="flex w-[97px] shrink-0 items-center gap-1.5 rounded-r-[10px] bg-linear-to-b from-[#6cc06a] via-[#399a3b] via-20% to-[#2b7f2b] pl-2.5 shadow-[inset_-2px_-1px_3px_#1d5c1d]">
        <svg width="18" height="18" viewBox="0 0 18 18" aria-hidden="true">
          <path d="M2 3c2-2 4-2 6-1L7 8C5 7 3 7 1 9z" fill="#f0582c" />
          <path d="M9 2c2 1 4 1 7-1l-1 6c-3 2-5 2-7 1z" fill="#7fcb32" />
          <path d="M1 10c2-2 4-2 6-1l-1 6c-2-1-4-1-6 1z" fill="#4a8df0" />
          <path d="M8 9c2 1 4 1 7-1l-1 6c-3 2-5 2-7 1z" fill="#fbc92c" />
        </svg>
        <span className="font-['Open_Sans',sans-serif] text-[17px] leading-none font-bold italic [text-shadow:1px_1px_1px_#143f14]">
          start
        </span>
      </button>
      <button className="my-[3px] ml-[9px] flex w-[158px] items-center gap-1 rounded-[2px] bg-[#1c49b0] pl-2.5 shadow-[inset_1px_1px_2px_#0d2c7c]">
        <AcadLogo size={16} />
        <span>AutoCAD 2006 - [Dra...</span>
      </button>
      <button className="my-[3px] ml-[3px] flex w-[158px] items-center gap-1 rounded-[2px] bg-[#3c81f3] pl-2.5 shadow-[inset_1px_1px_1px_#6aa2fb]">
        <Icon>
          <path d="M4 1h9l2 2v12H4z" fill="#fff" stroke="#5c75a8" />
          <path d="M10 5h4M10 7h4M6 12h8" stroke="#8a9fca" />
          <path d="M1 3h9v8H1z" fill="#e3ebfb" stroke="#2b579a" />
          <path d="m3 5 1 4 1.500-3L7 9l1-4" stroke="#2b579a" strokeWidth="1.200" />
        </Icon>
        <span>باسمه تعالى - Micros...</span>
      </button>
      <div className="flex-1" />
      <div className="flex w-[153px] shrink-0 items-center gap-[3px] border-l border-[#0c4fa8] bg-linear-to-b from-[#2bb2f5] via-[#1193ea] via-20% to-[#0f82d8] pl-2.5">
        <Icon>
          <path d="M0 0h16v16H0z" fill="#fff" />
          <path d="M8 1h7v14H8z" fill="#1f8e7c" />
          <path d="M7 4C2 4 2 12 7 12" stroke="#1f8e7c" strokeWidth="2" />
          <path d="M9 4c5 0 5 8 0 8" stroke="#fff" strokeWidth="2" />
        </Icon>
        <Icon>
          <path d="M1 5h3l5-4v14l-5-4H1z" fill="#d5542f" stroke="#3d150a" />
          <path d="M11 3v10M13 2v12" stroke="#3d150a" strokeWidth="1.200" />
        </Icon>
        <Icon>
          <path d="M1 3h14v11H4z" fill="#7cba2b" />
          <path d="M0 8c3-5 9-5 12 0-3 4-9 4-12 0z" fill="#e9f6c9" stroke="#3f6b0b" />
          <circle cx="6" cy="8" r="2" fill="#3f6b0b" />
        </Icon>
        <Icon>
          <circle cx="8" cy="8" r="5.5" stroke="#9fdcff" strokeWidth="3.5" />
          <path d="m8 8 3 5 5 2-1-4z" fill="#2f76c9" />
          <path d="M3 4c2-2 5-3 8-1" stroke="#fff" />
        </Icon>
        <time className="whitespace-nowrap">05:38 ب.ظ</time>
      </div>
    </footer>
  );
}

export default function App() {
  return (
    <div className="flex h-screen flex-col bg-[#a9c4ea] font-['DejaVu_Sans_Condensed','DejaVu_Sans',sans-serif] text-[11px] text-black">
      <Gradients />
      <div className="mx-0.5 mt-0.5 flex min-h-0 flex-1 flex-col rounded-t-lg bg-[#0a3fd6] px-1 pb-1 shadow-[inset_0_2px_2px_#2f7df7]">
        <TitleBar />
        <div className="flex min-h-0 flex-1 flex-col bg-[#ece9d8]">
          <MenuBar />
          <Toolbars />
          <Workspace />
          <CommandPanel />
          <StatusBar />
        </div>
      </div>
      <Taskbar />
    </div>
  );
}
